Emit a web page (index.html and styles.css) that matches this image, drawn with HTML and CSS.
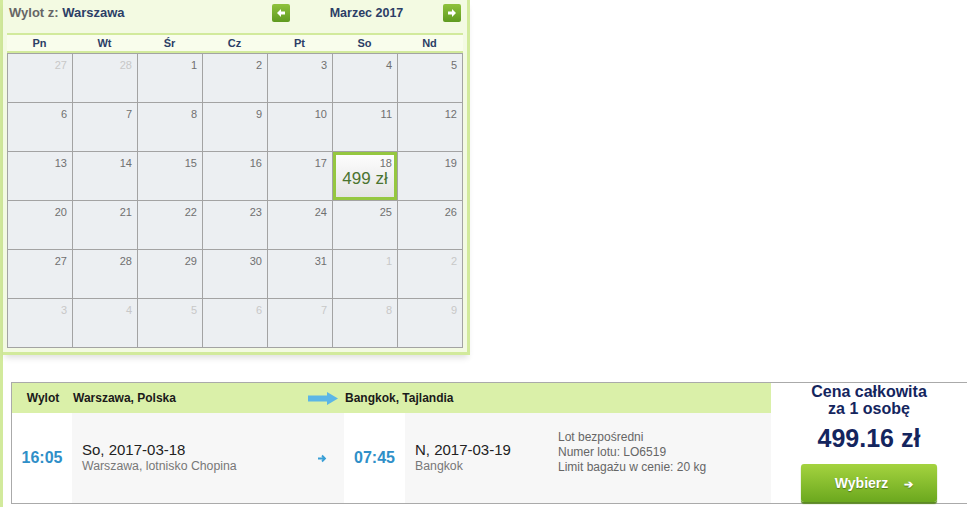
FILE: index.html
```html
<!DOCTYPE html>
<html lang="pl">
<head>
    <meta charset="UTF-8">
    <title>Wylot z: Warszawa</title>
    <link rel="stylesheet" href="styles.css">
</head>
<body>
<div class="page">

    <div class="calendar">
        <div class="cal-top">
            <div class="cal-from">Wylot z: <b>Warszawa</b></div>
            <a class="nav-btn prev" href="#"><svg width="10" height="10" viewBox="0 0 10 10"><path d="M1 5 L5 1 V3.5 H9 V6.5 H5 V9 Z" fill="#fff"/></svg></a>
            <div class="cal-month">Marzec 2017</div>
            <a class="nav-btn next" href="#"><svg width="10" height="10" viewBox="0 0 10 10"><path d="M9 5 L5 1 V3.5 H1 V6.5 H5 V9 Z" fill="#fff"/></svg></a>
        </div>
        <div class="weekdays">
            <span>Pn</span><span>Wt</span><span>Śr</span><span>Cz</span><span>Pt</span><span>So</span><span>Nd</span>
        </div>
        <div class="days" id="days"></div>
    </div>

    <div class="flight">
        <div class="fh fh-label">Wylot</div>
        <div class="fh fh-city">Warszawa, Polska</div>
        <div class="fh fh-arrow"><svg width="30" height="13" viewBox="0 0 30 13"><path d="M0 3.5 H19 V0 L30 6.5 L19 13 V9.5 H0 Z" fill="#5cb6e6"/></svg></div>
        <div class="fh fh-city2">Bangkok, Tajlandia</div>
        <div class="fh fh-rest"></div>

        <div class="price">
            <div class="price-title">Cena całkowita<br>za 1 osobę</div>
            <div class="price-value">499.16 zł</div>
            <a class="choose" href="#">Wybierz <span class="choose-arrow">&#x2794;</span></a>
        </div>

        <div class="fb time">16:05</div>
        <div class="fb place">
            <div class="date">So, 2017-03-18</div>
            <div class="airport">Warszawa, lotnisko Chopina</div>
        </div>
        <div class="fb small-arrow"><svg width="10" height="9" viewBox="0 0 10 9"><path d="M1 4.5 H8 M5 1.5 L8 4.5 L5 7.5" stroke="#3a9fd6" stroke-width="1.8" fill="none"/></svg></div>
        <div class="fb time">07:45</div>
        <div class="fb place">
            <div class="date">N, 2017-03-19</div>
            <div class="airport">Bangkok</div>
        </div>
        <div class="fb info">
            Lot bezpośredni<br>
            Numer lotu: LO6519<br>
            Limit bagażu w cenie: 20 kg
        </div>
    </div>

</div>

<script>
    // March 2017 starts on Wednesday; fill six weeks with neighbouring days
    let days = document.getElementById("days");
    let list = [27, 28];
    for (let d = 1; d <= 31; d++) list.push(d);
    let next = 1;
    while (list.length < 42) list.push(next++);

    list.forEach((d, i) => {
        let cell = document.createElement("div");
        cell.className = "day";
        if (i < 2 || i > 32) cell.classList.add("other");
        if (i === 19) {
            cell.classList.add("selected");
            cell.innerHTML = `<span class="num">${d}</span><span class="fare">499 zł</span>`;
        } else {
            cell.innerHTML = `<span class="num">${d}</span>`;
        }
        days.appendChild(cell);
    });
</script>
</body>
</html>
```

FILE: styles.css
```css
body {
    margin: 0;
    font-family: "Liberation Sans", Arial, sans-serif;
    background-color: #fff;
}
.page {
    border-left: 3px solid #d2ea9c;
    height: 507px;
    box-sizing: border-box;
}

/* calendar */
.calendar {
    width: 467px;
    height: 355px;
    box-sizing: border-box;
    background-color: #f3fae2;
    border-right: 3px solid #d2ea9c;
    border-bottom: 3px solid #d2ea9c;
    box-shadow: 0 5px 6px -2px rgba(0, 0, 0, 0.12);
    padding: 0 4px 0 4px;
}
.cal-top {
    height: 33px;
    display: flex;
    align-items: center;
    font-size: 13px;
    font-weight: bold;
}
.cal-from {
    color: #666;
    width: 263px;
    padding-left: 2px;
    margin-top: -8px;
}
.cal-from b {
    color: #2c3e66;
}
.nav-btn {
    width: 18px;
    height: 18px;
    border-radius: 2px;
    background: linear-gradient(#8fc23c, #5f9a20);
    display: flex;
    align-items: center;
    justify-content: center;
    margin-top: -7px;
}
.cal-month {
    width: 153px;
    text-align: center;
    color: #2c3e66;
    font-size: 12.5px;
    margin-top: -7px;
}
.weekdays {
    display: grid;
    grid-template-columns: repeat(7, 65px);
    height: 16px;
    background-color: #f9fdec;
    border-top: 2px solid #d2ea9c;
    border-bottom: 2px solid #d2ea9c;
    font-size: 11px;
    font-weight: bold;
    color: #2c3e66;
    line-height: 16px;
    text-align: center;
}
.days {
    display: grid;
    grid-template-columns: repeat(7, 64px);
    grid-auto-rows: 48px;
    gap: 1px;
    padding: 1px;
    background-color: #a3a3a3;
    width: 456px;
    box-sizing: border-box;
}
.day {
    background-color: #eceff2;
    position: relative;
    font-size: 11px;
    color: #707070;
}
.day .num {
    position: absolute;
    top: 5px;
    right: 5px;
}
.day.other {
    color: #c8c8c8;
}
.day.selected {
    border: 3px solid #95c740;
    background: linear-gradient(#fdfdfd, #e4e4e4);
}
.day.selected .num {
    top: 2px;
    right: 2px;
}
.fare {
    position: absolute;
    top: 14px;
    left: 0;
    right: 0;
    text-align: center;
    font-size: 17px;
    color: #4b7430;
}

/* flight row */
.flight {
    margin: 27px 0 0 8px;
    display: grid;
    grid-template-columns: 60px 233px 39px 61px 143px 223px 1fr;
    grid-template-rows: 30px 90px;
    border: 1px solid #aaa;
    border-right: none;
    height: 122px;
    box-sizing: border-box;
    font-size: 13px;
}
.fh {
    background-color: #daf0a9;
    display: flex;
    align-items: center;
    font-weight: bold;
    color: #1a1a1a;
    font-size: 12px;
}
.fh-label {
    justify-content: center;
    padding-left: 2px;
}
.fh-city {
    padding-left: 1px;
}
.fh-arrow {
    padding-left: 3px;
}
.fh-city2 {
    grid-column: 4 / 6;
    padding-left: 1px;
}
.price {
    grid-column: 7;
    grid-row: 1 / 3;
    text-align: center;
    color: #14255e;
    font-weight: bold;
}
.price-title {
    font-size: 16px;
    line-height: 17px;
}
.price-value {
    font-size: 25px;
    margin-top: 6px;
    line-height: 30px;
}
.choose {
    display: block;
    width: 136px;
    height: 38px;
    box-sizing: border-box;
    padding-left: 10px;
    margin: 11px auto 0;
    border-radius: 3px;
    background: linear-gradient(#a4d33f, #6ba81e);
    box-shadow: 0 2px 1px #5d8a25;
    color: #fff;
    text-decoration: none;
    font-size: 14px;
    line-height: 38px;
    text-shadow: 0 1px 1px rgba(0, 0, 0, 0.35);
}
.choose-arrow {
    font-size: 11px;
    margin-left: 12px;
}
.fb {
    display: flex;
    align-items: center;
}
.time {
    background-color: #fff;
    justify-content: center;
    color: #2f8fc8;
    font-weight: bold;
    font-size: 16px;
}
.place {
    background-color: #f7f7f7;
    flex-direction: column;
    align-items: flex-start;
    justify-content: center;
    padding-left: 10px;
}
.date {
    font-size: 15px;
    line-height: 16px;
    color: #222;
}
.airport {
    font-size: 12.3px;
    line-height: 16px;
    color: #777;
}
.small-arrow {
    background-color: #f7f7f7;
    justify-content: flex-start;
    padding-left: 12px;
}
.info {
    background-color: #f7f7f7;
    color: #666;
    font-size: 12px;
    line-height: 15px;
    padding-left: 10px;
    padding-bottom: 12px;
}
```
